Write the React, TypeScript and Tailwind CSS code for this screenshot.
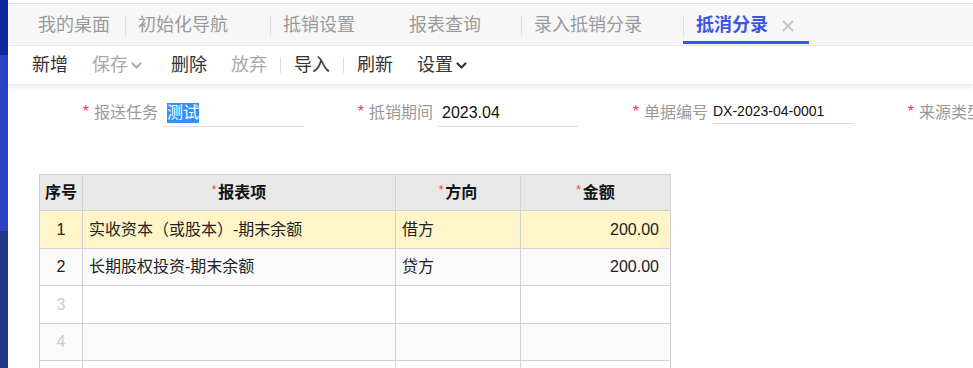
import { ReactNode } from "react";

const FONT = "font-['Liberation_Sans','Noto_Sans_CJK_SC',sans-serif]";

interface Tab {
  title: string;
  width: string;
  sep: boolean;
  active?: boolean;
}

const tabs: Tab[] = [
  { title: "我的桌面", width: "w-[100px]", sep: false },
  { title: "初始化导航", width: "w-[145px]", sep: true },
  { title: "抵销设置", width: "w-[126px]", sep: true },
  { title: "报表查询", width: "w-[125px]", sep: false },
  { title: "录入抵销分录", width: "w-[162px]", sep: true },
  { title: "抵消分录", width: "w-[126px]", sep: true, active: true },
];

function Chevron({ color }: { color: string }) {
  return (
    <svg width="11" height="7" viewBox="0 0 11 7" className="ml-[3px]" fill="none">
      <path d="M1.5 1.5l4 4 4-4" stroke={color} strokeWidth="2.2" strokeLinecap="round" strokeLinejoin="round" />
    </svg>
  );
}

function ToolBtn({ label, muted, dropdown }: { label: string; muted?: boolean; dropdown?: boolean }) {
  return (
    <div
      className={`flex items-center h-full pl-[12px] ${dropdown ? "pr-[17px]" : "pr-[12px]"} ${
        muted ? "text-[#aaaaaa]" : "text-[#333333]"
      }`}
    >
      <span>{label}</span>
      {dropdown && <Chevron color={muted ? "#aaaaaa" : "#333333"} />}
    </div>
  );
}

function ToolSep() {
  return <div className="w-px h-[16px] bg-[#dddddd] mx-[1px]" />;
}

function Field({ label, children, short }: { label: string; children: ReactNode; short?: boolean }) {
  return (
    <div className="flex items-start w-[275px] shrink-0">
      <div className="w-[134px] shrink-0 h-[28px] flex items-center justify-end pr-[5px] text-[16px] text-[#999999] whitespace-nowrap">
        <span className="text-[#f5365c] text-[16px] mr-[5px] -translate-y-[1px]">*</span>
        {label}
      </div>
      <div
        className={`w-[141px] shrink-0 border-b border-[#dcdcdc] flex items-center ${
          short ? "h-[25px]" : "h-[28px]"
        }`}
      >
        {children}
      </div>
    </div>
  );
}

interface Row {
  no: string;
  item: string;
  dir: string;
  amt: string;
  bg: string;
  h: string;
  faded?: boolean;
}

const rows: Row[] = [
  { no: "1", item: "实收资本（或股本）-期末余额", dir: "借方", amt: "200.00", bg: "bg-[#fff5c9]", h: "h-[38px]" },
  { no: "2", item: "长期股权投资-期末余额", dir: "贷方", amt: "200.00", bg: "bg-[#fafafa]", h: "h-[37px]" },
  { no: "3", item: "", dir: "", amt: "", bg: "bg-white", h: "h-[38px]", faded: true },
  { no: "4", item: "", dir: "", amt: "", bg: "bg-[#fafafa]", h: "h-[37px]", faded: true },
  { no: "", item: "", dir: "", amt: "", bg: "bg-white", h: "h-[38px]", faded: true },
];

const cell = "border-r border-b border-[#d2d2d2] flex items-center";

function HeadCell({ label, req }: { label: string; req?: boolean }) {
  return (
    <div className={`${cell} justify-center font-bold text-[16px] text-[#111111]`}>
      {req && <span className="text-[#ff3333] text-[12px] font-normal mr-[2px] -translate-y-[3px]">*</span>}
      {label}
    </div>
  );
}

export default function App() {
  return (
    <div className={`flex w-[973px] h-[368px] overflow-hidden bg-white ${FONT}`}>
      {/* left edge strip */}
      <div className="w-[8px] shrink-0 flex flex-col">
        <div className="h-[55px] bg-[#10289b]" />
        <div className="h-[176px] bg-[#2944c2]" />
        <div className="flex-1 bg-[#223789]" />
      </div>

      <div className="flex-1 min-w-0 flex flex-col">
        <div className="h-[3px] bg-white shrink-0" />

        {/* tabs */}
        <div className="h-[43px] shrink-0 border-t border-b border-t-[#dcdcdc] border-b-[#e6e6e6] bg-[#f7f7f7] flex pl-[17px]">
          {tabs.map((t) => (
            <div key={t.title} className={`relative flex items-center h-[41px] pt-[2px] shrink-0 ${t.width}`}>
              <div className={`w-px h-[20px] ${t.sep ? "bg-[#e0e0e0]" : "bg-transparent"}`} />
              <span
                className={`ml-[12px] text-[18px] whitespace-nowrap ${
                  t.active ? "font-bold text-[#3b56e6]" : "text-[#9a9a9a]"
                }`}
              >
                {t.title}
              </span>
              {t.active && (
                <>
                  <svg width="12" height="12" viewBox="0 0 12 12" className="ml-[14px]">
                    <path d="M1 1l10 10M11 1l-10 10" stroke="#c4c4c4" strokeWidth="1.8" />
                  </svg>
                  <span className="absolute left-0 right-0 bottom-[1px] h-[3px] bg-[#3b56e6]" />
                </>
              )}
            </div>
          ))}
        </div>

        {/* toolbar */}
        <div className="relative z-10 h-[38px] shrink-0 bg-white flex items-center pl-[12px] text-[18px] shadow-[0_3px_4px_rgba(0,0,0,0.09)]">
          <ToolBtn label="新增" />
          <ToolBtn label="保存" muted dropdown />
          <ToolBtn label="删除" />
          <ToolBtn label="放弃" muted />
          <ToolSep />
          <ToolBtn label="导入" />
          <ToolSep />
          <ToolBtn label="刷新" />
          <ToolBtn label="设置" dropdown />
        </div>

        {/* form */}
        <div className="flex items-start pl-[21px] pt-[15px] shrink-0">
          <Field label="报送任务">
            <span className="ml-[4px] text-[16px] leading-[20px] bg-[#3390ff] text-white">测试</span>
          </Field>
          <Field label="抵销期间">
            <span className="ml-[4px] text-[16px] text-[#111111]">2023.04</span>
          </Field>
          <Field label="单据编号" short>
            <span className="text-[14px] text-[#111111]">DX-2023-04-0001</span>
          </Field>
          <Field label="来源类型">
            <span />
          </Field>
        </div>

        {/* grid */}
        <div className="ml-[31px] mt-[47px] w-[632px] shrink-0 border-l border-t border-[#d2d2d2] text-[16px]">
          <div className="grid grid-cols-[43px_313px_125px_150px] h-[36px] bg-[#e8e8e8]">
            <HeadCell label="序号" />
            <HeadCell label="报表项" req />
            <HeadCell label="方向" req />
            <HeadCell label="金额" req />
          </div>
          {rows.map((r, i) => (
            <div key={i} className={`grid grid-cols-[43px_313px_125px_150px] ${r.h} ${r.bg}`}>
              <div className={`${cell} justify-center ${r.faded ? "text-[#cccccc]" : "text-[#222222]"}`}>{r.no}</div>
              <div className={`${cell} pl-[6px] text-[#222222] whitespace-nowrap`}>{r.item}</div>
              <div className={`${cell} pl-[6px] text-[#222222]`}>{r.dir}</div>
              <div className={`${cell} justify-end pr-[11px] text-[#222222]`}>{r.amt}</div>
            </div>
          ))}
        </div>
      </div>
    </div>
  );
}
